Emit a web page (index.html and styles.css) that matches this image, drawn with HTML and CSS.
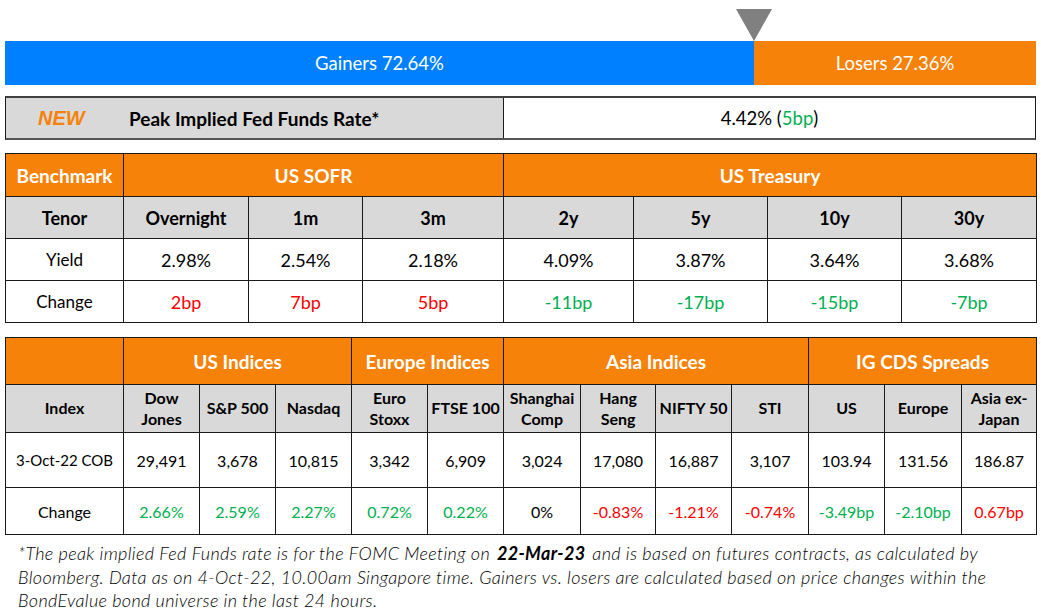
FILE: index.html
```html
<!DOCTYPE html>
<html>
<head>
<meta charset="utf-8">
<link rel="stylesheet" href="styles.css">
</head>
<body>
<div class="page">
  <div class="marker-row"><div class="marker" style="margin-left: calc(72.64% - 18px)"></div></div>
  <div class="bar">
    <div class="gain" style="width: 72.64%">Gainers 72.64%</div>
    <div class="lose">Losers 27.36%</div>
  </div>
  <div class="fed">
    <div class="fed-label"><span class="new">NEW</span><span class="fed-title">Peak Implied Fed Funds Rate*</span></div>
    <div class="fed-value">4.42% (<span class="up">5bp</span>)</div>
  </div>
  <table class="grid t1">
    <colgroup>
      <col style="width:118px"><col style="width:125px"><col style="width:114px"><col style="width:141px">
      <col style="width:130px"><col style="width:134px"><col style="width:134px"><col style="width:135px">
    </colgroup>
    <tr class="head">
      <td>Benchmark</td><td colspan="3">US SOFR</td><td colspan="4">US Treasury</td>
    </tr>
    <tr class="sub">
      <td>Tenor</td><td>Overnight</td><td>1m</td><td>3m</td><td>2y</td><td>5y</td><td>10y</td><td>30y</td>
    </tr>
    <tr class="val">
      <td>Yield</td><td>2.98%</td><td>2.54%</td><td>2.18%</td><td>4.09%</td><td>3.87%</td><td>3.64%</td><td>3.68%</td>
    </tr>
    <tr class="val">
      <td>Change</td><td class="down">2bp</td><td class="down">7bp</td><td class="down">5bp</td><td class="up">-11bp</td><td class="up">-17bp</td><td class="up">-15bp</td><td class="up">-7bp</td>
    </tr>
  </table>
  <table class="grid t2">
    <colgroup>
      <col style="width:118px"><col style="width:76px"><col style="width:76px"><col style="width:76px"><col style="width:76px"><col style="width:76px">
      <col style="width:77px"><col style="width:75px"><col style="width:76px"><col style="width:77px">
      <col style="width:76px"><col style="width:77px"><col style="width:75px">
    </colgroup>
    <tr class="head">
      <td></td><td colspan="3">US Indices</td><td colspan="2">Europe Indices</td><td colspan="4">Asia Indices</td><td colspan="3">IG CDS Spreads</td>
    </tr>
    <tr class="sub">
      <td>Index</td><td>Dow<br>Jones</td><td>S&amp;P 500</td><td>Nasdaq</td><td>Euro<br>Stoxx</td><td>FTSE 100</td><td>Shanghai<br>Comp</td><td>Hang<br>Seng</td><td>NIFTY 50</td><td>STI</td><td>US</td><td>Europe</td><td>Asia ex-<br>Japan</td>
    </tr>
    <tr class="val tall">
      <td class="date">3-Oct-22 COB</td><td>29,491</td><td>3,678</td><td>10,815</td><td>3,342</td><td>6,909</td><td>3,024</td><td>17,080</td><td>16,887</td><td>3,107</td><td>103.94</td><td>131.56</td><td>186.87</td>
    </tr>
    <tr class="val">
      <td>Change</td><td class="up">2.66%</td><td class="up">2.59%</td><td class="up">2.27%</td><td class="up">0.72%</td><td class="up">0.22%</td><td>0%</td><td class="down">-0.83%</td><td class="down">-1.21%</td><td class="down">-0.74%</td><td class="up">-3.49bp</td><td class="up">-2.10bp</td><td class="down">0.67bp</td>
    </tr>
  </table>
  <p class="note">*The peak implied Fed Funds rate is for the FOMC Meeting on <b>22-Mar-23</b> and is based on futures contracts, as calculated by Bloomberg. Data as on 4-Oct-22, 10.00am Singapore time. Gainers vs. losers are calculated based on price changes within the BondEvalue bond universe in the last 24 hours.</p>
</div>
</body>
</html>
```
FILE: styles.css
```css
* { box-sizing: border-box; }
html, body { margin: 0; padding: 0; background: #fff; }
body { font-family: Lato, "Open Sans", "Liberation Sans", sans-serif; color: #000; }
.page { width: 1041px; padding: 0 5px; }

.marker-row { height: 41px; padding-top: 9px; }
.marker {
  width: 0; height: 0;
  border-left: 18px solid transparent;
  border-right: 18px solid transparent;
  border-top: 32px solid #808080;
}

.bar { display: flex; height: 44px; color: #fff; font-size: 18.5px; }
.gain { background: #0080ff; display: flex; align-items: center; justify-content: center; }
.lose { flex: 1; background: #f7820a; display: flex; align-items: center; justify-content: center; }

.fed {
  display: flex; height: 44px; margin-top: 11px;
  border: 1px solid #1a1a1a; border-top: 2px solid #404040; border-bottom: 2px solid #555;
}
.fed-label {
  width: 498px; background: #d9d9d9; border-right: 1px solid #1a1a1a;
  display: flex; align-items: center; padding-left: 32px;
}
.new {
  font-family: "Liberation Sans", Arial, sans-serif; font-weight: bold; font-style: italic;
  color: #f7820a; font-size: 20px; width: 91px;
}
.fed-title { font-weight: bold; font-size: 19px; }
.fed-value { flex: 1; display: flex; align-items: center; justify-content: center; font-size: 18.5px; }

.grid { border-collapse: collapse; table-layout: fixed; width: 1031px; }
.grid td { border: 1px solid #1a1a1a; text-align: center; padding: 0 2px; }
.t1 { margin-top: 13px; }
.t1 tr { height: 42px; }
.t1 tr.head { height: 43px; }
.t1 .val td:not(:first-child) { font-size: 18px; }
.t1 .sub td { font-size: 18px; }
.head td { background: #f7820a; color: #fff; font-weight: bold; font-size: 19px; }
.sub td { background: #d9d9d9; font-weight: bold; font-size: 17px; }
.val td { font-size: 17px; }

.t2 { margin-top: 14px; }
.t2 tr.head { height: 47px; }
.t2 tr.sub { height: 48px; }
.t2 tr.sub td { font-size: 16px; line-height: 1.3; }
.t2 tr.val { height: 47px; }
.t2 tr.tall { height: 55px; }
.t2 .val td { font-size: 16px; }
.t2 .val td.date { font-size: 15px; }

.up { color: #00b050; }
.down { color: #ff0000; }

.note {
  margin: 7px 0 0 13px; font-style: italic; font-size: 18px; line-height: 23.5px;
  font-weight: 300; width: 995px; letter-spacing: 0.35px;
}
.note b { font-weight: bold; padding: 0 2px; }
```
